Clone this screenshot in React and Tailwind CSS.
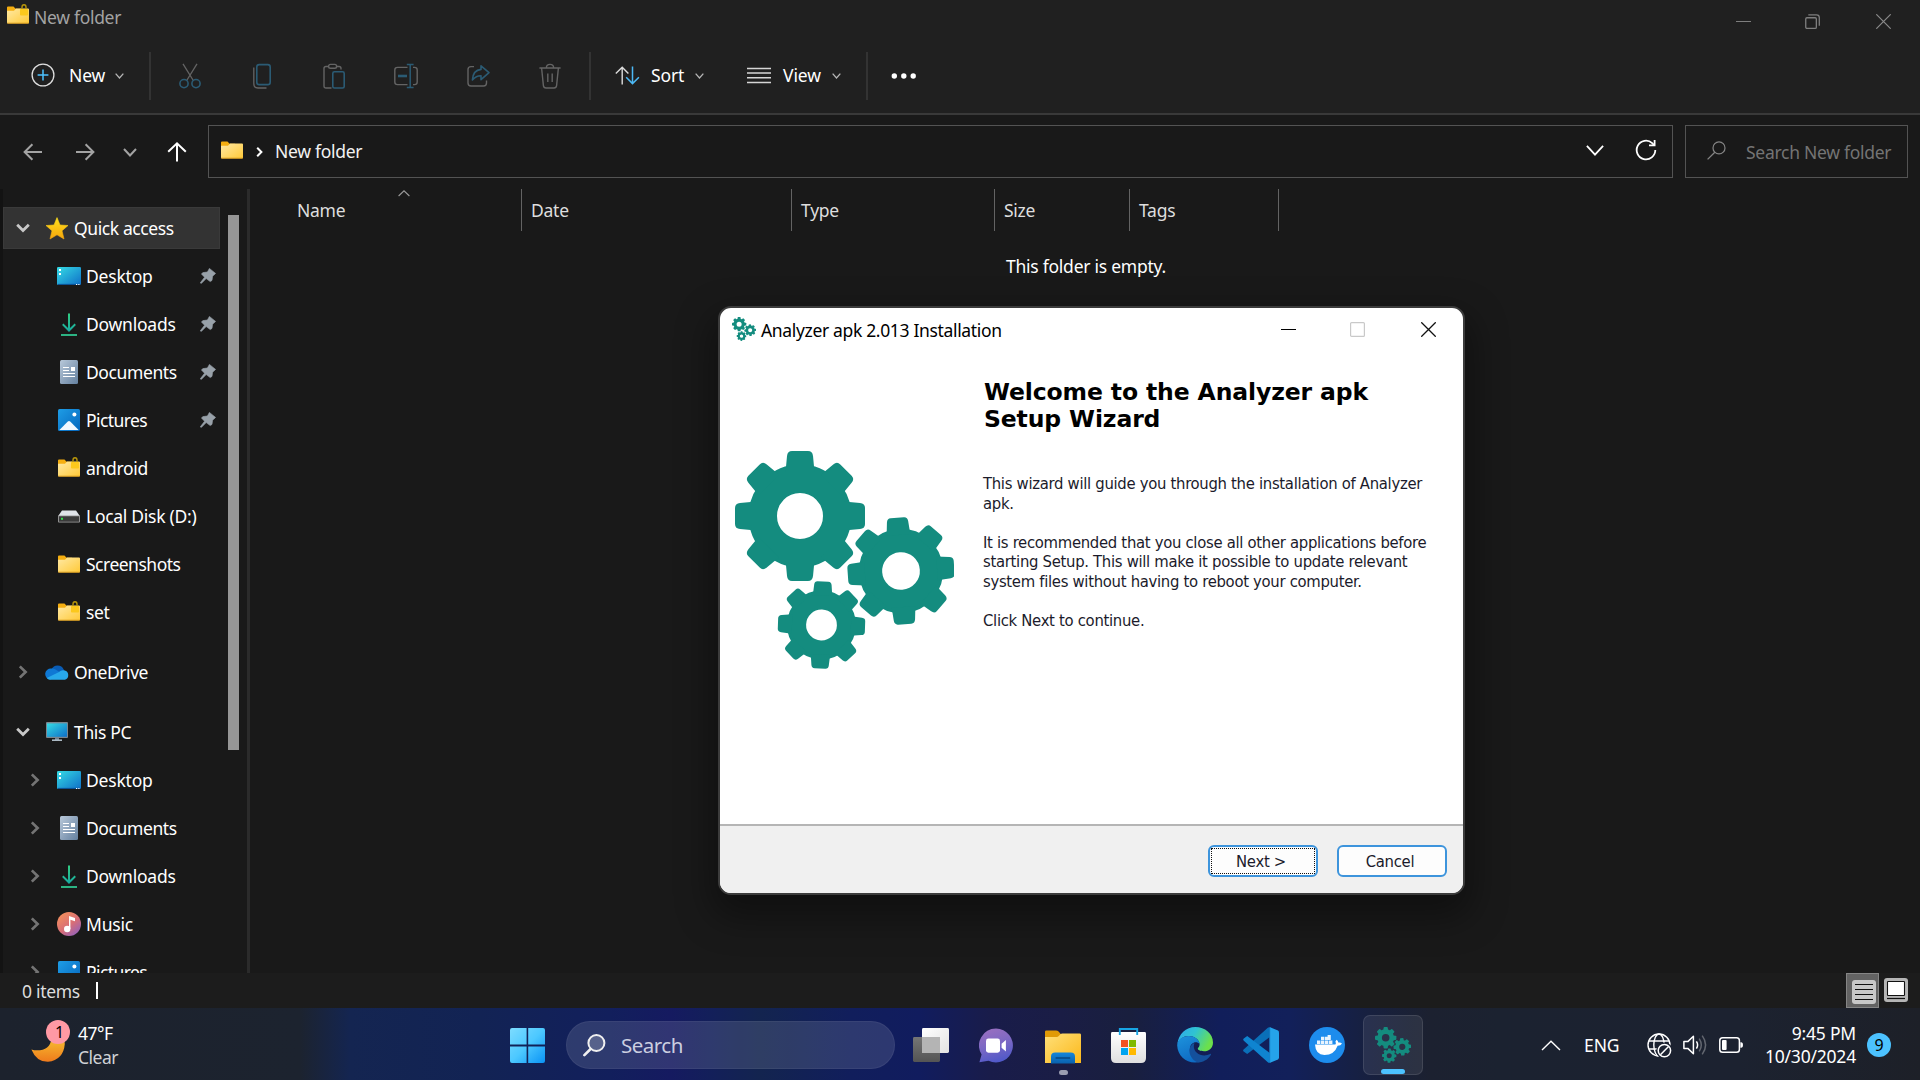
import React from "react";

const Svg = ({ w, h, box, className = "", children }) => (
  <svg width={w} height={h} viewBox={box || `0 0 ${w} ${h}`} fill="none" className={"block shrink-0 " + className}>
    {children}
  </svg>
);

/* ---------- shared icons ---------- */

function Folder({ locked }) {
  return (
    <Svg w={22} h={20}>
      <defs>
        <linearGradient id="fold" x1="0" y1="0" x2="1" y2="1">
          <stop offset="0" stopColor="#ffe9a4" />
          <stop offset="1" stopColor="#ffc937" />
        </linearGradient>
      </defs>
      <path d="M0 3.6Q0 2.6 1 2.6H6.5L8.6 4.8H14V8H0Z" fill="#f5ae10" />
      <path d="M0 6.8H7L9 4.6H21Q22 4.6 22 5.6V18.6Q22 19.6 21 19.6H1Q0 19.6 0 18.6Z" fill="url(#fold)" />
      <path d="M0.3 19.2H21.7" stroke="#d99a1c" strokeWidth="0.9" />
      {locked && (
        <g>
          <path d="M15 6V3Q15 .7 17 .7T19 3V6" stroke="#b8960a" strokeWidth="1.4" />
          <rect x="13" y="5" width="8" height="6.6" rx="0.8" fill="#fcc81c" />
        </g>
      )}
    </Svg>
  );
}

const Chevron = ({ w = 9, h = 6, color = "#b5b5b5", sw = 1.3 }) => (
  <Svg w={w} h={h}>
    <path d={`M${sw / 2} ${sw / 2}L${w / 2} ${h - sw * 0.75}L${w - sw / 2} ${sw / 2}`} stroke={color} strokeWidth={sw} />
  </Svg>
);

const ChevronRight = () => (
  <Svg w={10} h={14}>
    <path d="M1.8 1.4L7.6 7L1.8 12.6" stroke="#747474" strokeWidth="2.7" />
  </Svg>
);

const ChevronOpen = () => (
  <Svg w={14} h={10}>
    <path d="M1.2 1.8L7 7.5L12.8 1.8" stroke="#c8c8c8" strokeWidth="2.8" />
  </Svg>
);

function DesktopIcon() {
  return (
    <Svg w={24} h={18}>
      <defs>
        <linearGradient id="desk" x1="0" y1="0" x2="1" y2="1">
          <stop offset="0" stopColor="#35dbe4" />
          <stop offset="1" stopColor="#0f6fc8" />
        </linearGradient>
      </defs>
      <rect width="24" height="18" rx="1.3" fill="url(#desk)" />
      <path d="M1 17.4H23" stroke="#0a4c8e" />
      <path d="M2 2h2v2H2zM2 6h2v2H2zM19 17h1.2v1H19zM21.3 17h1.2v1h-1.2z" fill="#fff" />
    </Svg>
  );
}

function DownloadIcon() {
  return (
    <Svg w={16} h={23}>
      <defs>
        <linearGradient id="down" x1="0" y1="0" x2="0" y2="1">
          <stop offset="0" stopColor="#31cf83" />
          <stop offset="1" stopColor="#17a8a0" />
        </linearGradient>
      </defs>
      <path d="M7 .5h2V15l4.6-4.4 1.3 1.4L8 19 1.1 12l1.3-1.4L7 15z" fill="url(#down)" />
      <path d="M0 22H16" stroke="#2fc690" strokeWidth="1.8" />
    </Svg>
  );
}

function DocumentIcon() {
  return (
    <Svg w={18} h={24}>
      <defs>
        <linearGradient id="docu" x1="0" y1="0" x2="1" y2="1">
          <stop offset="0" stopColor="#b9c9da" />
          <stop offset="1" stopColor="#64809f" />
        </linearGradient>
      </defs>
      <rect width="18" height="24" rx="1.5" fill="url(#docu)" />
      <path d="M3 7.5h6M3 10.5h6M3 13.5h12M3 16.5h12" stroke="#fff" strokeWidth="1.2" />
      <rect x="11" y="7" width="4" height="4" fill="#fff" />
    </Svg>
  );
}

function PictureIcon() {
  return (
    <Svg w={22} h={22}>
      <defs>
        <linearGradient id="pict" x1="0" y1="0" x2="1" y2="1">
          <stop offset="0" stopColor="#1e9de6" />
          <stop offset="1" stopColor="#0566bd" />
        </linearGradient>
      </defs>
      <rect width="22" height="22" rx="1.6" fill="url(#pict)" />
      <path d="M1.4 21L9.8 12.6Q11 11.5 12.2 12.6L20.6 21Z" fill="#f2f8ff" />
      <circle cx="16.4" cy="5.6" r="2" fill="#fff" />
    </Svg>
  );
}

function MusicIcon() {
  return (
    <Svg w={24} h={24}>
      <defs>
        <linearGradient id="musi" x1="0.1" y1="0.1" x2="0.8" y2="1">
          <stop offset="0" stopColor="#f48f5c" />
          <stop offset="0.55" stopColor="#d76e78" />
          <stop offset="1" stopColor="#9161bd" />
        </linearGradient>
      </defs>
      <circle cx="12" cy="12" r="12" fill="url(#musi)" />
      <path d="M12 4L18 6V9.3L13.4 7.8V17H12Z" fill="#fff" />
      <circle cx="10.2" cy="17" r="3.2" fill="#fff" />
    </Svg>
  );
}

const DiskIcon = () => (
  <Svg w={22} h={13}>
    <path d="M4 .6H18L22 6.2H0Z" fill="#dfe3e8" />
    <rect x="0" y="5.6" width="22" height="6.9" rx=".9" fill="#9b9b9b" />
    <rect x=".9" y="6.3" width="20.2" height="5.4" fill="#3a3a3a" />
    <rect x="3" y="7.8" width="2" height="2" fill="#35e04a" />
  </Svg>
);

function StarIcon() {
  return (
    <Svg w={22} h={23}>
      <defs>
        <linearGradient id="star" x1="0" y1="0" x2="0" y2="1">
          <stop offset="0" stopColor="#ffe01c" />
          <stop offset="1" stopColor="#f6a60c" />
        </linearGradient>
      </defs>
      <path d="M11 .6L14 8 22 8.5 16 13.8 18 22 11 17.8 4 22 6 13.8 0 8.5 8 8Z" fill="url(#star)" stroke="url(#star)" strokeWidth=".6" strokeLinejoin="round" />
    </Svg>
  );
}

const CloudIcon = () => (
  <Svg w={24} h={16}>
    <path d="M6.5 5.2A6.7 6.7 0 0 1 18.7 5.5L21 9 11 12Z" fill="#0a5cb4" />
    <path d="M5 15.5A5 5 0 0 1 6.4 4.6Q8.6 4.3 10.5 5.6L17 9.4 10 14Z" fill="#0f78d4" />
    <path d="M13.6 8.2Q16.5 5.6 19.6 6.6A4.8 4.8 0 0 1 20 15.8H5Q3 15.8 1.8 14Z" fill="#28a8ea" />
  </Svg>
);

const PcIcon = () => (
  <Svg w={22} h={19}>
    <rect width="22" height="16" rx="1" fill="#7b868f" />
    <rect x="1" y="1.4" width="20" height="13.4" fill="url(#desk)" />
    <path d="M9 16h4v2H9z" fill="#6f8090" />
    <path d="M6 18.2H16" stroke="#b5c3ce" strokeWidth="1.5" />
  </Svg>
);

const Pin = () => (
  <Svg w={16} h={16}>
    <path d="M9.4 .4L15.6 5.4 12.6 8.2 12 12.4 10.2 13.6 6.2 10.6 1.2 15.6 .3 14.8 4.6 9.2 1.4 6 3 4.6 7.4 4Z" fill="#98a1a9" stroke="#98a1a9" strokeWidth=".6" strokeLinejoin="round" />
  </Svg>
);

/* ---------- gears logo ---------- */

function Gear({ x, y, s, rot = 0 }) {
  const teeth = [0, 45, 90, 135, 180, 225, 270, 315];
  return (
    <g transform={`translate(${x} ${y}) rotate(${rot}) scale(${s})`}>
      <circle r="37.2" fill="none" stroke="#148c7f" strokeWidth="28.4" />
      {teeth.map((a) => (
        <path key={a} transform={`rotate(${a})`} fill="#148c7f" d="M-14.5 -44L-13 -60Q-12.5 -65 -8 -65H8Q12.5 -65 13 -60L14.5 -44Z" />
      ))}
    </g>
  );
}

const Gears = ({ w, h }) => (
  <Svg w={w} h={h} box="0 0 219 218">
    <Gear x={65} y={65} s={1} />
    <Gear x={166} y={120} s={0.82} rot={-4} />
    <Gear x={86.5} y={174} s={0.67} rot={2} />
  </Svg>
);

/* ---------- explorer header ---------- */

const TitleBar = () => (
  <div className="flex h-[38px] items-start text-[#a3a3a3]">
    <div className="mt-1 ml-[7px]"><Folder locked /></div>
    <span className="mt-[5px] ml-[5px] text-[17.5px] leading-6 tracking-[-0.3px]">New folder</span>
    <Svg w={15} h={15} className="mt-[14px] ml-auto"><path d="M0 7.5H15" stroke="#7e7e7e" /></Svg>
    <Svg w={15} h={15} className="mt-[14px] ml-[54px]">
      <rect x=".75" y="3.75" width="10.6" height="10.6" rx="1.2" stroke="#7e7e7e" strokeWidth="1.3" />
      <path d="M3.3 .8H11.5Q14.3 .8 14.3 3.6V11.7" stroke="#7e7e7e" strokeWidth="1.3" />
    </Svg>
    <Svg w={15} h={15} className="mt-[14px] mr-[29px] ml-14"><path d="M.3 .3L14.7 14.7M14.7 .3L.3 14.7" stroke="#8a8a8a" strokeWidth="1.2" /></Svg>
  </div>
);

const G = "#646464";
const B = "#2b5b74";
const Divider = () => <div className="h-12 w-[2px] shrink-0 bg-[#333333]" />;

const Toolbar = () => (
  <div className="flex h-[77px] items-center border-b-2 border-[#393939] text-[17.5px] text-white">
    <Svg w={24} h={24} className="mb-[2px] ml-[31px]">
      <circle cx="12" cy="12" r="10.9" stroke="#dedede" strokeWidth="1.3" />
      <path d="M12 6.6V17.4M6.6 12H17.4" stroke="#4cc2ff" strokeWidth="1.5" />
    </Svg>
    <span className="ml-[14px] w-[37px] tracking-[-0.1px]">New</span>
    <div className="mr-[25px] ml-[9px]"><Chevron /></div>
    <Divider />
    <Svg w={22} h={26} className="ml-[28px]">
      <path d="M4 .8L14.6 18M18 .8L7.4 18" stroke={G} strokeWidth="1.3" />
      <circle cx="5" cy="20.6" r="4.1" stroke={B} strokeWidth="1.6" />
      <circle cx="17" cy="20.6" r="4.1" stroke={B} strokeWidth="1.6" />
    </Svg>
    <Svg w={18} h={26} className="ml-[52px]">
      <rect x="3.8" y="1.6" width="13.4" height="20" rx="2.4" stroke={B} strokeWidth="1.6" />
      <path d="M.8 4.5V20.5Q.8 25 5 25H13.5" stroke={G} strokeWidth="1.3" />
    </Svg>
    <Svg w={22} h={26} className="ml-[52px]">
      <path d="M8.5 25H3Q1 25 1 23V5.5Q1 3.5 3 3.5H5.5M13.5 3.5H16Q18 3.5 18 5.5V6.5" stroke={G} strokeWidth="1.4" />
      <rect x="5.6" y="1.4" width="8" height="3.8" rx="1.8" stroke={G} strokeWidth="1.4" />
      <rect x="9.8" y="8.8" width="11.4" height="16.2" rx="1.6" stroke={B} strokeWidth="1.6" />
    </Svg>
    <Svg w={24} h={26} className="ml-[49px]">
      <path d="M13.5 4.4H3.5Q.8 4.4 .8 7V19Q.8 21.6 3.5 21.6H13.5M19 4.4H20.5Q23.2 4.4 23.2 7V19Q23.2 21.6 20.5 21.6H19" stroke={G} strokeWidth="1.4" />
      <path d="M4 13H13" stroke={B} strokeWidth="2.6" />
      <path d="M16.2 1.6V24.4M12.8 1.6H19.6M12.8 24.4H19.6" stroke={B} strokeWidth="1.5" />
    </Svg>
    <Svg w={23} h={26} className="ml-[49px]">
      <path d="M7 3.6H4Q1 3.6 1 6.6V20Q1 23 4 23H16.5Q19.5 23 19.5 20V17.5" stroke={G} strokeWidth="1.4" />
      <path d="M14 6.4V2.8L22 9.6 14 16.6V12.8Q9.4 12.6 5.4 17Q6 7.2 14 6.4Z" stroke={B} strokeWidth="1.6" strokeLinejoin="round" />
    </Svg>
    <Svg w={22} h={26} className="ml-[49px]">
      <path d="M.4 5H21.6M7.4 4.8Q7.4 1.4 11 1.4T14.6 4.8M2.6 5L4.4 22.6Q4.7 25 7 25H15Q17.3 25 17.6 22.6L19.4 5M8.8 10.4V19M13.2 10.4V19" stroke={G} strokeWidth="1.4" />
    </Svg>
    <div className="ml-[28px]"><Divider /></div>
    <Svg w={25} h={19} className="ml-6">
      <path d="M7.2 18.4V1.4M.8 7.6L7.2 1.2L13.4 7.6" stroke="#dcdcdc" strokeWidth="1.4" />
      <path d="M17.5 .4V17.4M11.2 11.2L17.5 17.6L23.9 11.2" stroke="#4cb9f5" strokeWidth="1.5" />
    </Svg>
    <span className="ml-[11px] w-[34px] tracking-[-0.1px]">Sort</span>
    <div className="ml-[10px]"><Chevron /></div>
    <Svg w={24} h={17} className="ml-[43px]">
      <path d="M0 1.4H24M0 6.1H24M0 10.8H24M0 15.4H24" stroke="#d6d6d6" strokeWidth="1.5" />
    </Svg>
    <span className="ml-3 w-10 tracking-[-0.1px]">View</span>
    <div className="ml-[9px]"><Chevron /></div>
    <div className="ml-[25px]"><Divider /></div>
    <Svg w={26} h={6} className="ml-[23px]">
      <circle cx="3.3" cy="3" r="2.7" fill="#fff" /><circle cx="12.8" cy="3" r="2.7" fill="#fff" /><circle cx="22.2" cy="3" r="2.7" fill="#fff" />
    </Svg>
  </div>
);

const AddressBar = () => (
  <div className="flex h-[74px] items-start pt-[10px]">
    <div className="flex h-[54px] w-[208px] items-center">
      <Svg w={20} h={18} className="ml-[23px]"><path d="M19 9H1.8M9.4 1.2L1.6 9L9.4 16.8" stroke="#a3a3a3" strokeWidth="2" /></Svg>
      <Svg w={20} h={18} className="ml-[32px]"><path d="M1 9H18.2M10.6 1.2L18.4 9L10.6 16.8" stroke="#a3a3a3" strokeWidth="2" /></Svg>
      <div className="ml-[28px]"><Chevron w={14} h={9} color="#a3a3a3" sw={2} /></div>
      <Svg w={20} h={20} className="ml-[30px]"><path d="M10 19.5V1.6M1.2 9.8L10 1.4L18.8 9.8" stroke="#fff" strokeWidth="2" /></Svg>
    </div>
    <div className="flex h-[53px] w-[1465px] items-center border border-[#535353]">
      <div className="mb-[5px] ml-3"><Folder /></div>
      <Svg w={7} h={10} className="mt-px ml-[13px]"><path d="M1.2 .8L5.4 5L1.2 9.2" stroke="#fff" strokeWidth="2" /></Svg>
      <span className="ml-3 text-[17.5px] tracking-[-0.28px] text-[#f2f2f2]">New folder</span>
      <div className="mr-[31px] mb-[3px] ml-auto"><Chevron w={18} h={11} color="#fff" sw={1.8} /></div>
      <Svg w={22} h={22} className="mr-[15px] mb-1">
        <path d="M20.3 11A9.3 9.3 0 1 1 17.2 4.1L19 6" stroke="#fff" strokeWidth="1.8" />
        <path d="M19.6 1V6.4H14" stroke="#fff" strokeWidth="1.8" />
      </Svg>
    </div>
    <div className="ml-3 flex h-[53px] w-[223px] items-center border border-[#535353]">
      <Svg w={19} h={19} className="mb-[3px] ml-[21px]">
        <circle cx="12" cy="6.9" r="6" stroke="#858585" strokeWidth="1.2" /><path d="M7.8 11.2L.6 18.4" stroke="#858585" strokeWidth="1.3" />
      </Svg>
      <span className="mt-px ml-[20px] text-[17.5px] tracking-[-0.28px] whitespace-nowrap text-[#747474]">Search New folder</span>
    </div>
  </div>
);

/* ---------- navigation pane ---------- */

function NavRow({ icon, label, pinned, root, open, closed, selected, tight, track = "tracking-[-0.35px]" }) {
  return (
    <div
      className={
        "ml-[3px] flex w-[217px] shrink-0 items-center text-[17.5px] text-white " +
        (tight ? "h-[42px] mb-[3px] " : "h-12 ") +
        (selected ? "bg-[#333333] border border-[#3a3a3a]" : "border border-transparent")
      }
    >
      <div className={root ? "ml-3 flex w-[14px] justify-center" : "ml-6 flex w-[14px] justify-center"}>
        {open && <ChevronOpen />}
        {closed && <ChevronRight />}
      </div>
      <div className="ml-[15px] flex w-6 justify-center">{icon}</div>
      <span className={"ml-[5px] pt-px whitespace-nowrap " + track}>{label}</span>
      {pinned && <div className="mr-[3px] ml-auto"><Pin /></div>}
    </div>
  );
}

const RaisedFolder = ({ locked }) => <div className="mb-[3px]"><Folder locked={locked} /></div>;

const Sidebar = () => (
  <div className="flex h-[784px] w-[251px] shrink-0 overflow-hidden">
    <div className="flex w-[228px] flex-col overflow-hidden border-l-[3px] border-[#131313] pt-[18px]">
      <div className="-ml-[3px] flex flex-col">
        <NavRow icon={<StarIcon />} label="Quick access" root open selected tight track="tracking-[-0.4px]" />
        <NavRow icon={<DesktopIcon />} label="Desktop" pinned track="tracking-[-0.2px]" />
        <NavRow icon={<DownloadIcon />} label="Downloads" pinned track="tracking-[-0.23px]" />
        <NavRow icon={<DocumentIcon />} label="Documents" pinned track="tracking-[-0.4px]" />
        <NavRow icon={<PictureIcon />} label="Pictures" pinned track="tracking-[-0.6px]" />
        <NavRow icon={<RaisedFolder locked />} label="android" track="tracking-[-0.3px]" />
        <NavRow icon={<DiskIcon />} label="Local Disk (D:)" track="tracking-[-0.28px]" />
        <NavRow icon={<RaisedFolder />} label="Screenshots" track="tracking-[-0.5px]" />
        <NavRow icon={<RaisedFolder locked />} label="set" />
        <div className="h-3" />
        <NavRow icon={<CloudIcon />} label="OneDrive" root closed track="tracking-[-0.45px]" />
        <div className="h-3" />
        <NavRow icon={<div className="mb-[2px]"><PcIcon /></div>} label="This PC" root open />
        <NavRow icon={<DesktopIcon />} label="Desktop" closed track="tracking-[-0.2px]" />
        <NavRow icon={<DocumentIcon />} label="Documents" closed track="tracking-[-0.4px]" />
        <NavRow icon={<DownloadIcon />} label="Downloads" closed track="tracking-[-0.23px]" />
        <NavRow icon={<MusicIcon />} label="Music" closed track="tracking-[-0.2px]" />
        <NavRow icon={<PictureIcon />} label="Pictures" closed track="tracking-[-0.6px]" />
      </div>
    </div>
    <div className="mt-[26px] h-[535px] w-[11px] bg-[#969696]" />
    <div className="ml-2 w-[3px] bg-[#2b2b2b]" />
  </div>
);

const Columns = () => (
  <div className="flex flex-1 flex-col">
    <div className="flex h-[42px] items-center text-[17.5px] tracking-[-0.25px] text-[#dedede]">
      <div className="flex h-full w-[271px] border-r border-[#636363] pl-[46px]">
        <span className="mt-[9px] leading-6">Name</span>
        <Svg w={12} h={7} className="mt-px ml-[53px]"><path d="M.6 6L6 .8L11.4 6" stroke="#9a9a9a" strokeWidth="1.1" /></Svg>
      </div>
      <div className="flex h-full w-[270px] items-center border-r border-[#636363] pt-px pl-[9px]">Date</div>
      <div className="flex h-full w-[203px] items-center border-r border-[#636363] pt-px pl-[9px]">Type</div>
      <div className="flex h-full w-[135px] items-center border-r border-[#636363] pt-px pl-[9px]">Size</div>
      <div className="flex h-full w-[149px] items-center border-r border-[#636363] pt-px pl-[9px]">Tags</div>
    </div>
    <span className="mt-[23px] ml-[755px] text-[17.5px] leading-6 tracking-[-0.25px] text-white">This folder is empty.</span>
  </div>
);

const StatusBar = () => (
  <div className="flex h-[35px] items-center bg-[#1c1c1c]">
    <span className="ml-[22px] w-[58px] pt-[2px] text-[17.5px] tracking-[-0.3px] whitespace-nowrap text-[#dedede]">0 items</span>
    <div className="ml-4 h-[17px] w-[2px] bg-white" />
    <div className="ml-auto flex h-[35px] w-[33px] items-center justify-center border border-[#858585] bg-[#636363] pt-[3px] pl-[3px]">
      <Svg w={24} h={24}>
        <rect width="24" height="24" rx="3" fill="#c8c8c8" />
        <path d="M3 4.5H21M3 9.5H21M3 14.5H21M3 19.5H21" stroke="#111" strokeWidth="1.2" />
      </Svg>
    </div>
    <Svg w={24} h={24} className="mr-3 mb-[2px] ml-[5px]">
      <rect width="24" height="24" rx="3" fill="#b5b5b5" />
      <rect x="3.5" y="3.5" width="17" height="14" rx=".6" fill="#fff" stroke="#111" strokeWidth="1.1" />
      <path d="M3 20.5H21" stroke="#111" strokeWidth="1.2" />
    </Svg>
  </div>
);

/* ---------- installer window ---------- */

const Dialog = () => (
  <div className="absolute top-[306px] left-[718px] flex h-[589px] w-[747px] flex-col overflow-hidden rounded-[13px] border-2 border-[#3c3c3c] bg-white text-black shadow-[0_16px_36px_6px_rgba(0,0,0,0.38)]">
    <div className="flex h-[46px] items-start">
      <div className="mt-[9px] ml-3"><Gears w={24} h={24} /></div>
      <span className="mt-[10px] ml-[5px] text-[17.5px] leading-6 tracking-[-0.34px]">Analyzer apk 2.013 Installation</span>
      <Svg w={15} h={15} className="mt-[14px] ml-auto"><path d="M0 7.5H15" stroke="#000" /></Svg>
      <Svg w={15} h={15} className="mt-[14px] ml-[54px]"><rect x=".6" y=".6" width="13.8" height="13.8" rx="1" stroke="#c9c9c9" strokeWidth="1.2" /></Svg>
      <Svg w={15} h={15} className="mt-[14px] mr-[27px] ml-14"><path d="M.3 .3L14.7 14.7M14.7 .3L.3 14.7" stroke="#111" strokeWidth="1.3" /></Svg>
    </div>
    <div className="flex flex-1 pl-[15px]">
      <div className="mt-[97px]"><Gears w={219} h={218} /></div>
      <div className="ml-[29px] flex flex-col font-[DejaVu_Sans,Verdana,sans-serif]">
        <h1 className="mt-[25px] ml-px text-[23.5px] leading-[27px] font-bold tracking-[-0.12px] whitespace-nowrap">
          Welcome to the Analyzer apk<br />Setup Wizard
        </h1>
        <p className="mt-[41px] font-[DejaVu_Sans_Condensed,DejaVu_Sans,Tahoma,sans-serif] text-[16.5px] leading-[19.5px] font-normal tracking-[-0.3px] whitespace-nowrap text-[#1b1b2b]">
          This wizard will guide you through the installation of Analyzer<br />apk.<br /><br />
          It is recommended that you close all other applications before<br />
          starting Setup. This will make it possible to update relevant<br />
          system files without having to reboot your computer.<br /><br />
          Click Next to continue.
        </p>
      </div>
    </div>
    <div className="flex h-[69px] items-start justify-end gap-[19px] border-t-2 border-[#b5b5b5] bg-[#f0f0f0] pt-[19px] pr-[16px] font-[DejaVu_Sans_Condensed,DejaVu_Sans,Tahoma,sans-serif] text-[16.5px] tracking-[-0.3px] text-[#1b1b2b]">
      <div className="flex h-8 w-[110px] rounded-[6px] border-2 border-[#3d94dc] bg-[#fdfdfd] p-px">
        <div className="flex flex-1 items-center justify-center border border-dotted border-[#111] pt-[2px] pr-1 whitespace-nowrap">Next &gt;</div>
      </div>
      <div className="flex h-8 w-[110px] items-center justify-center rounded-[6px] border-2 border-[#3d94dc] bg-[#fdfdfd] pt-[2px] pr-1">Cancel</div>
    </div>
  </div>
);

/* ---------- taskbar ---------- */

const StartIcon = () => (
  <Svg w={35} h={35}>
    <defs>
      <linearGradient id="win" x1="0" y1="0" x2="1" y2="1">
        <stop offset="0" stopColor="#7ddcff" /><stop offset=".5" stopColor="#4cc8ff" /><stop offset="1" stopColor="#0a93f5" />
      </linearGradient>
    </defs>
    <path d="M2 0H16.6V16.6H0V2Q0 0 2 0ZM18.2 0H33Q35 0 35 2V16.6H18.2ZM0 18.4H16.6V35H2Q0 35 0 33ZM18.2 18.4H35V33Q35 35 33 35H18.2Z" fill="url(#win)" />
  </Svg>
);

const TaskViewIcon = () => (
  <Svg w={36} h={34}>
    <defs>
      <linearGradient id="tv" x1="0" y1="0" x2="1" y2="1"><stop offset="0" stopColor="#fff" /><stop offset="1" stopColor="#e2e2e2" /></linearGradient>
      <linearGradient id="tv2" x1="0" y1="0" x2="0" y2="1"><stop offset="0" stopColor="#757575" /><stop offset="1" stopColor="#545454" /></linearGradient>
    </defs>
    <rect x="0" y="9" width="27" height="25" rx="1.4" fill="url(#tv2)" />
    <rect x="9" y="0" width="27" height="25" rx="1.4" fill="url(#tv)" />
    <path d="M9 9H27V25H9Z" fill="#b4b4b4" />
  </Svg>
);

const ChatIcon = () => (
  <Svg w={34} h={35}>
    <defs>
      <linearGradient id="chat" x1=".2" y1="0" x2=".5" y2="1"><stop offset="0" stopColor="#9a6fc0" /><stop offset=".5" stopColor="#7c68c4" /><stop offset="1" stopColor="#5059c9" /></linearGradient>
    </defs>
    <path d="M17 .5A17 17 0 1 1 9.5 32.8L.4 34.3 2.6 26.4A17 17 0 0 1 17 .5Z" fill="url(#chat)" />
    <rect x="7" y="10.5" width="14" height="14.2" rx="2.4" fill="#fff" />
    <path d="M22.6 15.8L26.9 12V23.4L22.6 19.8Z" fill="#fff" />
  </Svg>
);

const ExplorerIcon = () => (
  <Svg w={36} h={34}>
    <defs>
      <linearGradient id="exp" x1="0" y1="0" x2="1" y2="1"><stop offset="0" stopColor="#ffe07a" /><stop offset="1" stopColor="#fbb81a" /></linearGradient>
      <linearGradient id="exp2" x1="0" y1="0" x2="0" y2="1"><stop offset="0" stopColor="#1487dc" /><stop offset="1" stopColor="#0a62ad" /></linearGradient>
    </defs>
    <path d="M0 1.8Q0 .4 1.4 .4H11Q12.6 .4 13.6 1.6L15.8 4H24V9H0Z" fill="#e09a06" />
    <path d="M0 7H11.4Q13 7 14 5.8L15.4 4.2Q16 3.4 17.4 3.4H34.6Q36 3.4 36 4.8V33H0Z" fill="url(#exp)" />
    <path d="M6 33.4V26.6Q6 22.4 10.2 22.4H25.8Q30 22.4 30 26.6V33.4Z" fill="url(#exp2)" />
    <path d="M10.6 28H25.2" stroke="#084a86" strokeWidth="1.6" />
  </Svg>
);

const StoreIcon = () => (
  <Svg w={35} h={35}>
    <defs><linearGradient id="sto" x1="0" y1="0" x2="0" y2="1"><stop offset="0" stopColor="#fff" /><stop offset="1" stopColor="#dfdfdf" /></linearGradient></defs>
    <path d="M0 5.4Q0 4 1.4 4H33.6Q35 4 35 5.4V30Q35 35 30 35H5Q0 35 0 30Z" fill="url(#sto)" />
    <path d="M8.8 7V1H26.2V7" stroke="#18a5e4" strokeWidth="1.9" />
    <path d="M10 12h7v7h-7z" fill="#f25022" /><path d="M18 12h7v7h-7z" fill="#7fba00" /><path d="M10 20h7v7h-7z" fill="#00a4ef" /><path d="M18 20h7v7h-7z" fill="#ffb900" />
  </Svg>
);

const EdgeIcon = () => (
  <Svg w={36} h={36}>
    <defs>
      <linearGradient id="e1" x1="0" y1="0" x2="1" y2=".4"><stop offset="0" stopColor="#2fa6ee" /><stop offset=".5" stopColor="#2fc3d2" /><stop offset="1" stopColor="#6be04c" /></linearGradient>
      <linearGradient id="e2" x1="0" y1="0" x2=".4" y2="1"><stop offset="0" stopColor="#1d93dc" /><stop offset="1" stopColor="#0f6cc4" /></linearGradient>
    </defs>
    <path d="M.4 17C1.4 7 9 0 18.4 0C28 0 36 6.6 36 15.4C36 20.8 32 24.2 27 24.2C23 24.2 20.6 23 20.8 21.6C21 20.6 22.8 19.8 22.6 17C22 12 17 9 11.8 9C6.4 9 2 12 .4 17Z" fill="url(#e1)" />
    <path d="M.2 18.6C0 12.6 5.6 9 11.8 9C17.4 9 22 12.4 22.6 17C19.6 13.4 13 15.6 13 21.6C13 27.6 18 33 25 34.2C13 39 .6 31 .2 18.6Z" fill="url(#e2)" />
    <path d="M17.4 16C14.4 17.4 12 20.6 12.4 24.6C13 30.4 18 35.6 22 35.6C28 34.8 32 31.4 34 27.6C34.4 26.8 33.8 26.6 33.2 27C25.6 30.8 16.6 26.4 16.8 19Z" fill="#14509c" />
  </Svg>
);

const CodeIcon = () => (
  <Svg w={36} h={36}>
    <path d="M26.6 0L35 3.6Q36 4.2 36 5.4V30.6Q36 31.8 35 32.4L26.6 36V0Z" fill="#25a3ea" />
    <path d="M26.8 .2V10L4.2 27 .6 24.4Q-.4 23.4 .6 22.4L24.8 .8Q25.6 0 26.8 .2Z" fill="#0a6fb8" />
    <path d="M26.8 35.8V26L4.2 9 .8 11.4Q-.4 12.6 .8 13.8L24.8 35.2Q25.6 36 26.8 35.8Z" fill="#0f84d0" />
    <path d="M27 1V35" stroke="#1c90d8" strokeWidth=".8" />
  </Svg>
);

const DockerIcon = () => (
  <Svg w={36} h={36}>
    <circle cx="18" cy="18" r="18" fill="#1d8ced" />
    <path d="M6 17.6H26.4Q27.4 16.8 26.4 14.6L27.6 12.8Q29.2 14 29.3 15.6Q31.4 15.2 33 16.4Q31.8 18.8 28.6 18.8Q25.4 28 15.4 28Q6.6 28 6 17.6Z" fill="#fff" />
    <path d="M8 13.6h3.4v3.3H8zM12 13.6h3.4v3.3H12zM16 13.6h3.4v3.3H16zM20 13.6h3.4v3.3H20zM12 9.8h3.4v3.3H12zM16 9.8h3.4v3.3H16zM18.6 8h3.2v5.1h-3.2z" fill="#e9f4fe" />
  </Svg>
);

const GlobeIcon = () => (
  <Svg w={25} h={25}>
    <circle cx="12" cy="12" r="11" stroke="#fff" strokeWidth="1.4" />
    <ellipse cx="12" cy="12" rx="5.2" ry="11" stroke="#fff" strokeWidth="1.4" />
    <path d="M2 8H22M2 16H12" stroke="#fff" strokeWidth="1.4" />
    <circle cx="17.4" cy="17.6" r="8.2" fill="#1c2230" />
    <circle cx="17.4" cy="17.6" r="6.2" stroke="#fff" strokeWidth="1.5" />
    <path d="M13.4 21.8L21.6 13.4" stroke="#fff" strokeWidth="1.5" />
  </Svg>
);

const SoundIcon = () => (
  <Svg w={25} h={22}>
    <path d="M.9 7.6H4.8L10.4 2.2V19.8L4.8 14.4H.9Z" stroke="#fff" strokeWidth="1.5" strokeLinejoin="round" />
    <path d="M13.4 7.4Q15.8 11 13.4 14.6" stroke="#fff" strokeWidth="1.5" />
    <path d="M16.2 4.6Q20.4 11 16.2 17.4M19.2 1.6Q26 11 19.2 20.4" stroke="#62666f" strokeWidth="1.5" />
  </Svg>
);

const BatteryIcon = () => (
  <Svg w={24} h={16}>
    <rect x=".8" y=".8" width="19.6" height="14.4" rx="2.8" stroke="#fff" strokeWidth="1.5" />
    <rect x="3" y="3" width="4.6" height="10" rx="1" fill="#fff" />
    <path d="M21.4 5.2H22.4Q24 5.2 24 8T22.4 10.8H21.4Z" fill="#fff" />
  </Svg>
);

const Taskbar = () => (
  <div className="flex h-[72px] items-center bg-[linear-gradient(90deg,#1c222d_0px,#1c232f_300px,#142551_350px,#122354_480px,#121f5c_610px,#151a60_670px,#131f5a_710px,#13244f_760px,#111e5c_850px,#111c5e_920px,#191c4a_990px,#1a1d45_1060px,#191f3e_1130px,#111e5a_1220px,#12205a_1290px,#17203f_1370px,#1c2130_1430px,#1b2230_1500px,#1c2230_1740px,#1d2028_1920px)] pt-[2px] text-white">
    <div className="relative ml-[31px] h-9 w-[42px]">
      <Svg w={36} h={28} className="mt-[8px]">
        <defs><linearGradient id="moon" x1="0" y1="0" x2="0" y2="1"><stop offset="0" stopColor="#f8c833" /><stop offset="1" stopColor="#ee7a1c" /></linearGradient></defs>
        <path d="M.4 14.4Q5.6 27 17 26.8Q32.4 25 33.8 9Q33.6 3 31 0L21 0Q20.4 14.2 9 15.2Q4 15.6 .4 14.4Z" fill="url(#moon)" />
      </Svg>
      <div className="absolute -top-[7px] left-[15px] flex size-6 items-center justify-center rounded-full bg-[#ff99a4] pl-[3px] text-[16px] text-black">1</div>
    </div>
    <div className="ml-[5px] flex w-[120px] flex-col text-[17.5px] leading-6 tracking-[-0.5px]">
      <span>47°F</span>
      <span className="text-[#cfd1d5]">Clear</span>
    </div>
    <div className="ml-[312px]"><StartIcon /></div>
    <div className="ml-[21px] flex h-12 w-[329px] items-center rounded-full border border-white/5 bg-white/12">
      <Svg w={23} h={23} className="ml-[16px]">
        <circle cx="13.4" cy="9" r="8" fill="#fff" fillOpacity=".2" stroke="#f0f0f0" strokeWidth="2" />
        <path d="M7.6 15L1.4 21.2" stroke="#f0f0f0" strokeWidth="2.6" strokeLinecap="round" />
      </Svg>
      <span className="ml-[15px] text-[20.5px] tracking-[-0.5px] text-[#cbcee0]">Search</span>
    </div>
    <div className="ml-[18px]"><TaskViewIcon /></div>
    <div className="ml-[30px]"><ChatIcon /></div>
    <div className="ml-8 flex h-full w-9 flex-col items-center pt-[20px]">
      <ExplorerIcon />
      <div className="mt-[6px] h-[5px] w-[9px] rounded-full bg-[#9a9db0]" />
    </div>
    <div className="ml-[30px]"><StoreIcon /></div>
    <div className="ml-[31px]"><EdgeIcon /></div>
    <div className="ml-[30px]"><CodeIcon /></div>
    <div className="ml-[30px]"><DockerIcon /></div>
    <div className="ml-[18px] flex h-[60px] w-[60px] flex-col items-center rounded-[7px] border border-white/10 bg-white/8 pt-[11px]">
      <Gears w={36} h={36} />
      <div className="mt-[6px] h-[5px] w-6 rounded-full bg-[#4cc2ff]" />
    </div>
    <Svg w={20} h={11} className="ml-[118px]"><path d="M1 10L10 1.2L19 10" stroke="#fff" strokeWidth="1.4" /></Svg>
    <span className="ml-[23px] w-9 text-[17.5px] tracking-[-0.1px]">ENG</span>
    <div className="ml-[27px]"><GlobeIcon /></div>
    <div className="ml-[11px]"><SoundIcon /></div>
    <div className="ml-[11px]"><BatteryIcon /></div>
    <div className="ml-auto flex flex-col items-end text-[17.5px] leading-[23px] tracking-[-0.2px]">
      <span>9:45 PM</span>
      <span>10/30/2024</span>
    </div>
    <div className="mr-[29px] ml-[11px] flex size-6 items-center justify-center rounded-full bg-[#4cc2ff] text-[16px] text-black">9</div>
  </div>
);

export default function App() {
  return (
    <div className="relative flex h-[1080px] w-[1920px] flex-col overflow-hidden bg-[#191919] font-[Noto_Sans,Open_Sans,sans-serif]">
      <div className="bg-[#202020]">
        <TitleBar />
        <Toolbar />
      </div>
      <AddressBar />
      <div className="flex h-[784px] overflow-hidden">
        <Sidebar />
        <Columns />
      </div>
      <StatusBar />
      <Taskbar />
      <Dialog />
    </div>
  );
}
